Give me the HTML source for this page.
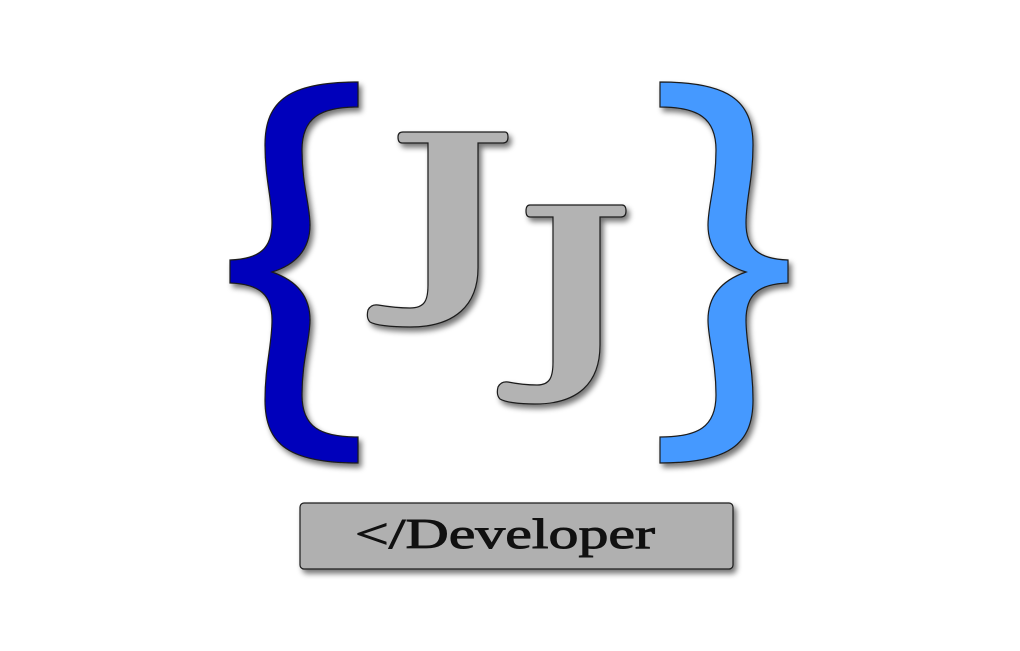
<!DOCTYPE html>
<html><head><meta charset="utf-8"><style>html,body{margin:0;padding:0;background:#fff;}svg{display:block}</style></head>
<body>
<svg width="1020" height="651" viewBox="0 0 1020 651" xmlns="http://www.w3.org/2000/svg">
<defs>
<filter id="sh" x="-20%" y="-20%" width="150%" height="150%">
<feGaussianBlur in="SourceAlpha" stdDeviation="3"/>
<feOffset dx="3" dy="4" result="b"/>
<feComponentTransfer><feFuncA type="linear" slope="0.55"/></feComponentTransfer>
<feMerge><feMergeNode/><feMergeNode in="SourceGraphic"/></feMerge>
</filter>
</defs>
<g filter="url(#sh)" stroke="#1a1a1a" stroke-width="1.2">
<path fill="#0000bb" d="M358,82 L358,107 C320,107 302,118 302,150 C302,185 310,205 310,225 C310,250 295,265 272,272 C295,280 310,295 310,320 C310,340 302,360 302,395 C302,427 320,437 358,437 L358,463 C290,463 265,445 265,400 C265,365 272,345 272,320 C272,295 260,284 230,283 L230,260 C260,259 272,248 272,223 C272,198 265,180 265,145 C265,100 290,82 358,82 Z"/>
<path fill="#4499ff" transform="translate(1018,0) scale(-1,1)" d="M358,82 L358,107 C320,107 302,118 302,150 C302,185 310,205 310,225 C310,250 295,265 272,272 C295,280 310,295 310,320 C310,340 302,360 302,395 C302,427 320,437 358,437 L358,463 C290,463 265,445 265,400 C265,365 272,345 272,320 C272,295 260,284 230,283 L230,260 C260,259 272,248 272,223 C272,198 265,180 265,145 C265,100 290,82 358,82 Z"/>
<path fill="#b3b3b3" d="M403,132 L505,132 Q508,132 508,137 Q508,143 503,143 L478,143 L478,268 C478,305 455,327 410,327 C390,327 375,325 370,322 Q366,318 368,310 Q371,304 378,305 C390,307 400,308 410,308 C425,308 428,300 428,285 L428,143 L402,143 Q398,143 398,137 Q398,132 403,132 Z"/>
<path fill="#b3b3b3" d="M530,205 L622,205 Q626,205 626,211 Q626,217 621,217 L600,217 L600,345 C600,383 578,404 535,404 C518,404 505,402 500,399 Q496,395 498,387 Q501,381 508,382 C518,384 528,385 537,385 C550,385 553,377 553,362 L553,217 L530,217 Q526,217 526,211 Q526,205 530,205 Z"/>
<rect x="300" y="503" width="433" height="66" rx="4" fill="#b0b0b0"/>
</g>
<text x="355" y="548" font-family="'Liberation Serif',serif" font-size="42" fill="#111" stroke="#111" stroke-width="0.9" textLength="300" lengthAdjust="spacingAndGlyphs">&lt;/Developer</text>
</svg>
</body></html>
